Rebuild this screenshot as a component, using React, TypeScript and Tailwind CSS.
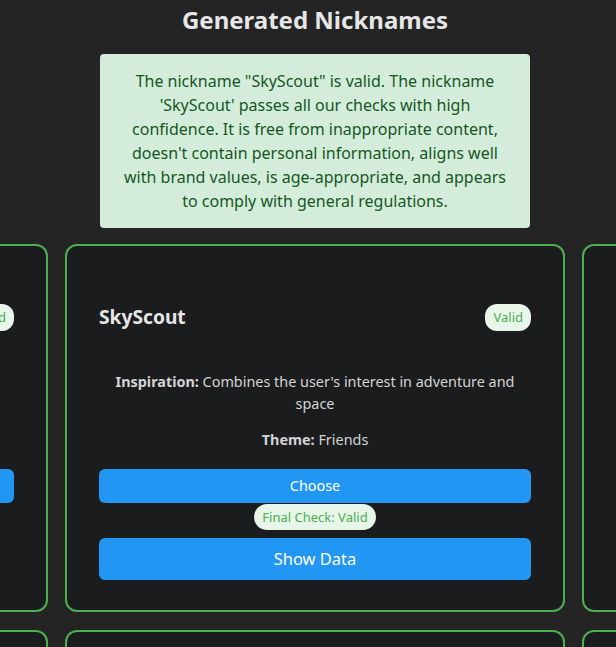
type Nickname = {
  name: string
  inspiration: string
  theme: string
  finalCheck: boolean
}

const nicknames: Nickname[] = [
  {
    name: "StarRider",
    inspiration: "Reflects the user's love of the night sky and exploring new places",
    theme: "Friends",
    finalCheck: false,
  },
  {
    name: "SkyScout",
    inspiration: "Combines the user's interest in adventure and space",
    theme: "Friends",
    finalCheck: true,
  },
  { name: "CloudHopper", inspiration: "Light and playful", theme: "Friends", finalCheck: false },
]

function NicknameCard({ item, empty }: { item?: Nickname; empty?: boolean }) {
  if (empty || !item) {
    return <div className="w-[500px] h-[368px] shrink-0 rounded-xl border-2 border-[#4caf50] bg-[#1b1c1e]" />
  }
  return (
    <div className="w-[500px] h-[368px] shrink-0 rounded-xl border-2 border-[#4caf50] bg-[#1b1c1e] px-8 pt-[58px] pb-8 flex flex-col">
      <div className="flex items-center justify-between h-[27px]">
        <h3 className="text-[19.2px] font-bold text-[#e6e6e6]">{item.name}</h3>
        <span className="rounded-xl bg-[#e8f5e9] px-2 py-1 text-[13px] leading-[19px] text-[#4caf50]">Valid</span>
      </div>

      <p className="mt-10 text-center text-[14.4px] leading-[22px] text-[#d4d4d4]">
        <strong className="font-bold">Inspiration:</strong> {item.inspiration}
      </p>
      <p className="mt-[14px] text-center text-[14.4px] leading-[22px] text-[#d4d4d4]">
        <strong className="font-bold">Theme:</strong> {item.theme}
      </p>

      <button className="mt-[18px] h-[34px] w-full shrink-0 rounded-md bg-[#2196f3] text-[14.4px] text-white">
        Choose
      </button>
      {item.finalCheck ? (
        <>
          <div className="flex justify-center mt-px">
            <span className="rounded-[13px] bg-[#e8f5e9] px-2 py-1 text-[13px] leading-[18px] text-[#4caf50]">
              Final Check: Valid
            </span>
          </div>
          <button className="mt-2 h-[42px] w-full shrink-0 rounded-md bg-[#2196f3] text-[16.5px] text-white">
            Show Data
          </button>
        </>
      ) : null}
    </div>
  )
}

export default function App() {
  return (
    <div
      className="h-[647px] w-[630px] overflow-hidden bg-[#242424] pt-1"
      style={{ fontFamily: '"Noto Sans", "Open Sans", sans-serif' }}
    >
      <h2 className="text-center text-[24px] font-bold leading-[32px] text-[#e6e6e6]">Generated Nicknames</h2>

      <div className="mx-auto mt-[18px] w-[430px] rounded bg-[#d4edda] px-[15px] py-[15px] text-center text-[16px] leading-[24px] text-[#155724]">
        The nickname "SkyScout" is valid. The nickname 'SkyScout' passes all our checks with high confidence. It is
        free from inappropriate content, doesn't contain personal information, aligns well with brand values, is
        age-appropriate, and appears to comply with general regulations.
      </div>

      <div className="mt-4 flex flex-col items-center gap-[18px]">
        <div className="flex justify-center gap-[17px]">
          {nicknames.map((n, i) => (
            <NicknameCard key={i} item={n} />
          ))}
        </div>
        <div className="flex justify-center gap-[17px]">
          <NicknameCard empty />
          <NicknameCard empty />
          <NicknameCard empty />
        </div>
      </div>
    </div>
  )
}
